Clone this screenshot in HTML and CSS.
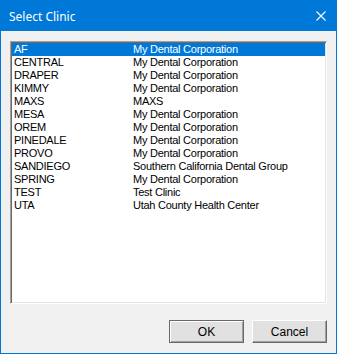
FILE: index.html
```html
<!DOCTYPE html>
<html lang="en">

<head>
  <meta charset="UTF-8">
  <title>Select Clinic</title>
  <link rel="stylesheet" href="styles.css">
</head>

<body>
  <div class="window">
    <!-- Title bar -->
    <div class="titlebar">
      <span class="title">Select Clinic</span>
      <svg class="close" width="10" height="10" viewBox="0 0 10 10">
        <path d="M0.5 0.5 L9.5 9.5 M9.5 0.5 L0.5 9.5" stroke="#fff" stroke-width="1.1" fill="none"/>
      </svg>
    </div>

    <div class="client">
      <div class="listbox">
        <div class="row selected"><span>AF</span><span>My Dental Corporation</span></div>
        <div class="row"><span>CENTRAL</span><span>My Dental Corporation</span></div>
        <div class="row"><span>DRAPER</span><span>My Dental Corporation</span></div>
        <div class="row"><span>KIMMY</span><span>My Dental Corporation</span></div>
        <div class="row"><span>MAXS</span><span>MAXS</span></div>
        <div class="row"><span>MESA</span><span>My Dental Corporation</span></div>
        <div class="row"><span>OREM</span><span>My Dental Corporation</span></div>
        <div class="row"><span>PINEDALE</span><span>My Dental Corporation</span></div>
        <div class="row"><span>PROVO</span><span>My Dental Corporation</span></div>
        <div class="row"><span>SANDIEGO</span><span>Southern California Dental Group</span></div>
        <div class="row"><span>SPRING</span><span>My Dental Corporation</span></div>
        <div class="row"><span>TEST</span><span>Test Clinic</span></div>
        <div class="row"><span>UTA</span><span>Utah County Health Center</span></div>
      </div>

      <div class="buttons">
        <button class="btn default">OK</button>
        <button class="btn">Cancel</button>
      </div>
    </div>
  </div>
</body>
</html>
```

FILE: styles.css
```css
html,
body {
  margin: 0;
  padding: 0;
}

body {
  font-family: "Liberation Sans", Arial, sans-serif;
  font-size: 11px;
  background-color: #f0f0f0;
}

.window {
  width: 337px;
  height: 354px;
  box-sizing: border-box;
  border: 1px solid #0078d7;
  display: flex;
  flex-direction: column;
  background-color: #f0f0f0;
}

.titlebar {
  height: 30px;
  background-color: #0078d7;
  display: flex;
  align-items: center;
  justify-content: space-between;
  padding: 0 10px 0 8px;
  margin-top: -1px;
  padding-top: 1px;
}

.title {
  color: white;
  font-family: "Noto Sans", "Open Sans", sans-serif;
  font-size: 12px;
}

.close {
  display: block;
}

.client {
  flex: 1;
  display: flex;
  flex-direction: column;
  padding: 10px 9px 10px 9px;
}

.listbox {
  height: 263px;
  box-sizing: border-box;
  background-color: white;
  border: 1px solid;
  border-color: #a0a0a0 #ffffff #ffffff #a0a0a0;
  box-shadow: inset 1px 1px #696969, inset -1px -1px #e3e3e3;
  padding: 1px;
}

.row {
  display: grid;
  grid-template-columns: 119px 1fr;
  height: 13px;
  line-height: 13px;
  padding-left: 2px;
  color: black;
  white-space: nowrap;
  letter-spacing: -0.25px;
}

.row.selected {
  background-color: #0078d7;
  color: white;
}

.buttons {
  display: flex;
  justify-content: flex-end;
  gap: 8px;
  margin-top: 16px;
}

.btn {
  width: 75px;
  height: 23px;
  box-sizing: border-box;
  font-family: "Liberation Sans", Arial, sans-serif;
  font-size: 12px;
  color: black;
  background-color: #e1e1e1;
  border: 1px solid;
  border-color: #ffffff #696969 #696969 #ffffff;
  box-shadow: inset -1px -1px #a0a0a0;
  padding: 0;
}

.btn.default {
  border-color: #696969;
  box-shadow: inset 1px 1px #ffffff, inset -1px -1px #a0a0a0;
}
```
